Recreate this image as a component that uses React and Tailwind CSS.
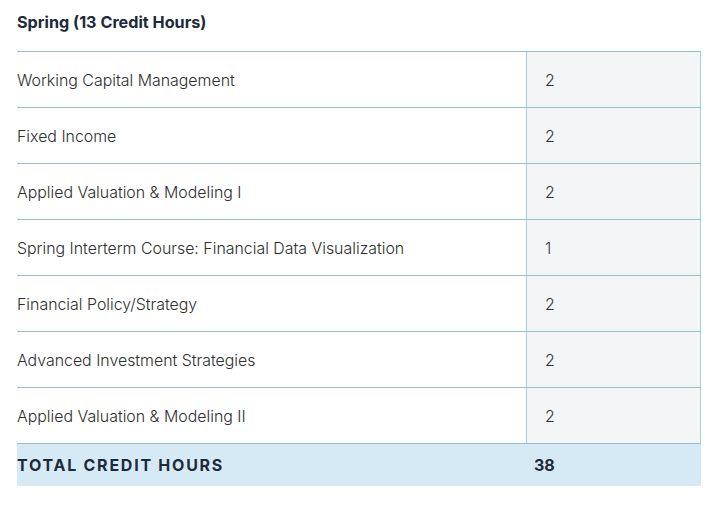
import React from "react";

const rows = [
  ["Working Capital Management", "2"],
  ["Fixed Income", "2"],
  ["Applied Valuation & Modeling I", "2"],
  ["Spring Interterm Course: Financial Data Visualization", "1"],
  ["Financial Policy/Strategy", "2"],
  ["Advanced Investment Strategies", "2"],
  ["Applied Valuation & Modeling II", "2"],
];

export default function App() {
  return (
    <div
      className="w-[720px] h-[507px] bg-white pl-[17px] pr-[19px]"
      style={{ fontFamily: "Inter, 'Open Sans', sans-serif" }}
    >
      <div className="h-[51px] flex items-center pb-[6px]">
        <h2 className="text-[16.2px] font-bold text-[#1d2a3a]">
          Spring (13 Credit Hours)
        </h2>
      </div>
      <div className="border-t border-[#8fc2c9]">
        {rows.map(([name, hrs], i) => (
          <div key={i} className="flex h-[56px] border-b border-[#8fc2c9]">
            <div className="flex-1 flex items-center pt-[3px] text-[15.9px] font-light text-[#2e2e2e]">
              {name}
            </div>
            <div className="w-[175px] flex items-center pt-[3px] pl-[18px] bg-[#f3f5f7] border-l border-r border-[#a9ced3] text-[15.9px] font-light text-[#333]">
              {hrs}
            </div>
          </div>
        ))}
        <div className="flex h-[42px] bg-[#d6eaf5] items-center">
          <div className="flex-1 text-[16px] font-bold tracking-[1.75px] text-[#1d2a3a]">
            TOTAL CREDIT HOURS
          </div>
          <div className="w-[175px] pl-[8px] text-[16px] font-bold text-[#1d2a3a]">38</div>
        </div>
      </div>
    </div>
  );
}
